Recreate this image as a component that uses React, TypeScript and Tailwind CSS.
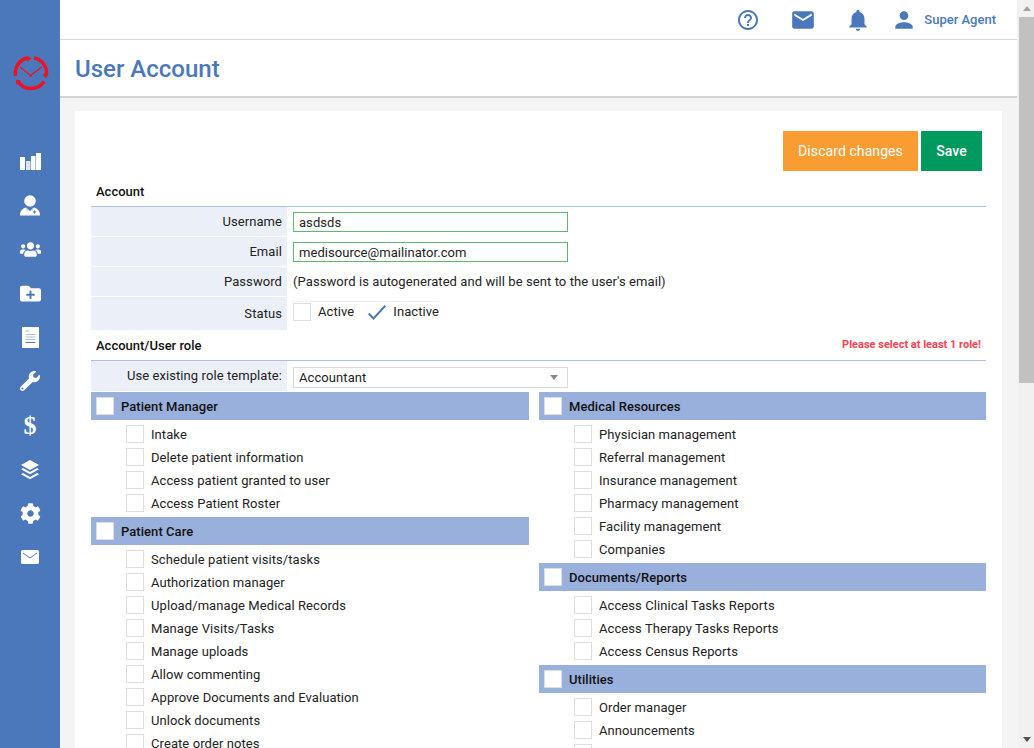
import { FaCog, FaFolderPlus, FaUsers, FaWrench } from "react-icons/fa";
import { MdEmail, MdHelpOutline, MdNotifications, MdPerson } from "react-icons/md";

const groupsLeft = [
  {
    title: "Patient Manager",
    items: ["Intake", "Delete patient information", "Access patient granted to user", "Access Patient Roster"],
  },
  {
    title: "Patient Care",
    items: [
      "Schedule patient visits/tasks",
      "Authorization manager",
      "Upload/manage Medical Records",
      "Manage Visits/Tasks",
      "Manage uploads",
      "Allow commenting",
      "Approve Documents and Evaluation",
      "Unlock documents",
      "Create order notes",
    ],
  },
];

const groupsRight = [
  {
    title: "Medical Resources",
    items: [
      "Physician management",
      "Referral management",
      "Insurance management",
      "Pharmacy management",
      "Facility management",
      "Companies",
    ],
  },
  {
    title: "Documents/Reports",
    items: ["Access Clinical Tasks Reports", "Access Therapy Tasks Reports", "Access Census Reports"],
  },
  {
    title: "Utilities",
    items: ["Order manager", "Announcements", ""],
  },
];

function Logo() {
  return (
    <svg width="36" height="36" viewBox="0 0 36 36" fill="none">
      <g stroke="#ee1122" strokeWidth="3.4">
        <path d="M2.600 21A15.500 15.500 0 0 1 14 3" />
        <path d="M21 2.800A15.500 15.500 0 0 1 33.500 19" />
        <path d="M31 26.500A15.500 15.500 0 0 1 5 26.500" />
      </g>
      <g fill="#ee1122">
        <path d="M14 .8l4.500 2.600-4 3.400z" />
        <path d="M35.500 18.500l-2.500 5-3.500-4.500z" />
        <path d="M3.500 30l-.8-5.500 5 1z" />
      </g>
      <path d="M7 12l12 9.500M29 12l-13 9.500" stroke="#ee1122" strokeWidth="1.200" />
    </svg>
  );
}

function BarsIcon() {
  return (
    <svg width="21" height="17" viewBox="0 0 21 17" fill="#fff">
      <rect x="0" y="4" width="5" height="13" />
      <rect x="6" y="8" width="4.500" height="9" opacity="0.8" />
      <rect x="11" y="3" width="4.500" height="14" />
      <rect x="16" y="0" width="5" height="17" />
    </svg>
  );
}

function DoctorIcon() {
  return (
    <svg width="20" height="21" viewBox="0 0 20 21" fill="#fff">
      <circle cx="10" cy="6" r="5.800" />
      <path d="M0 20.500c0-4 1.500-6.500 6-8l4 3.500 4-3.500c4.500 1.500 6 4 6 8z" />
      <path d="M14.500 15.500v3M13 17h3" stroke="#4a78bb" strokeWidth="1.200" />
      <path d="M6.500 13l1 3M13 13l-1 2" stroke="#a9bfe0" strokeWidth="0.800" />
    </svg>
  );
}

function DocIcon() {
  return (
    <svg width="17" height="21" viewBox="0 0 17 21">
      <rect x="0" y="0" width="17" height="21" fill="#fff" />
      <path d="M3.500 4h4M3.500 7.500h10M3.500 10h10M3.500 12.500h10" stroke="#a9bfe0" strokeWidth="1" />
      <path d="M3.500 15.500h10" stroke="#4a78bb" strokeWidth="1" />
    </svg>
  );
}

function LayersIcon() {
  return (
    <svg width="18" height="20" viewBox="0 0 18 20" fill="#fff" className="mt-[2px]">
      <path d="M9 0l9 5-9 5-9-5z" />
      <path d="M2 8l7 4 7-4 2 1.200-9 5-9-5z" />
      <path d="M2 13l7 4 7-4 2 1.200-9 5-9-5z" />
    </svg>
  );
}

function MailIcon() {
  return (
    <svg width="18" height="14" viewBox="0 0 18 14">
      <rect width="18" height="14" rx="1.500" fill="#fff" />
      <path d="M2 3l7 5 7-5" fill="none" stroke="#4a78bb" strokeWidth="1" />
    </svg>
  );
}

function CheckBox() {
  return <span className="block h-[18px] w-[18px] shrink-0 border border-[#dddddd] bg-white" />;
}

function RoleGroup({ title, items }: { title: string; items: string[] }) {
  return (
    <div className="pb-[3px]">
      <div className="flex h-[28px] items-center gap-[7px] bg-[#99b0dc] pl-[5px] font-medium tracking-[0.05px] text-[#111]">
        <CheckBox />
        <span className="pt-[2px]">{title}</span>
      </div>
      <ul className="pt-[2px]">
        {items.map((item, i) => (
          <li key={i} className="flex h-[23px] items-center gap-[7px] pl-[35px]">
            <CheckBox />
            <span className="pt-[2px]">{item}</span>
          </li>
        ))}
      </ul>
    </div>
  );
}

function Row({ label, className, children }: { label: string; className: string; children: React.ReactNode }) {
  return (
    <div className={`flex ${className}`}>
      <div className="flex w-[196px] shrink-0 items-center justify-end bg-[#ebf0f8] pr-[5px]">{label}</div>
      <div className="flex flex-1 items-center pl-[6px]">{children}</div>
    </div>
  );
}

function SectionHead({ title, note }: { title: string; note?: string }) {
  return (
    <div className="flex h-[31px] items-center justify-between border-b border-b-[#aebfdb] px-[5px] pt-[2px] text-[13px] font-medium tracking-normal text-[#111]">
      {title}
      {note && <span className="mb-[2px] text-[11px] font-bold text-[#ff4050]">{note}</span>}
    </div>
  );
}

function TextBox({ value }: { value: string }) {
  return (
    <div className="flex h-[20px] w-[275px] items-center border border-[#5cb870] px-[5px] pt-[3px] tracking-[0.05px] text-[#222]">
      {value}
    </div>
  );
}

export default function App() {
  return (
    <div
      className="flex h-screen overflow-hidden bg-[#f4f4f4] text-[13px] tracking-[0.08px] text-[#222]"
      style={{ fontFamily: "Roboto, sans-serif" }}
    >
      <aside className="flex w-[60px] shrink-0 flex-col items-center bg-[#4a78bb] text-white">
        <div className="mt-[55px] ml-[2px]">
          <Logo />
        </div>
        <nav className="mt-[48px] flex flex-col items-center">
          <span className="flex h-[44px] items-center"><BarsIcon /></span>
          <span className="flex h-[44px] items-center"><DoctorIcon /></span>
          <span className="flex h-[44px] items-center"><FaUsers size={21} /></span>
          <span className="flex h-[44px] items-center"><FaFolderPlus size={21} /></span>
          <span className="flex h-[44px] items-center"><DocIcon /></span>
          <span className="flex h-[44px] items-center"><FaWrench size={20} /></span>
          <span className="flex h-[44px] items-center font-['Liberation_Serif'] text-[26px] font-bold">$</span>
          <span className="flex h-[44px] items-center"><LayersIcon /></span>
          <span className="flex h-[44px] items-center"><FaCog size={21} /></span>
          <span className="flex h-[44px] items-center"><MailIcon /></span>
        </nav>
      </aside>

      <div className="flex min-w-0 flex-1 flex-col">
        <header className="flex h-[40px] shrink-0 items-center justify-end border-b border-[#d9d9d9] bg-white pr-[21px] tracking-normal text-[#4a78bb]">
          <MdHelpOutline size={24} />
          <MdEmail size={26} className="ml-[30px]" />
          <MdNotifications size={26} className="ml-[29px]" />
          <MdPerson size={26} className="ml-[20px]" />
          <span className="ml-[7px] font-medium">Super Agent</span>
        </header>
        <div className="flex h-[58px] shrink-0 items-center border-b-2 border-[#d4d4d4] bg-white pl-[15px] pt-[2px] tracking-normal">
          <h1 className="text-[24px] font-medium text-[#4a78bb]">User Account</h1>
        </div>

        <main className="flex-1 overflow-hidden px-[15px] pt-[13px]">
          <div className="h-[700px] bg-white px-[16px] pt-[20px]">
            <div className="flex justify-end gap-[3px] pr-[4px]">
              <button className="h-[40px] w-[135px] bg-[#f99d33] text-[14px] text-white">Discard changes</button>
              <button className="h-[40px] w-[61px] bg-[#009a5e] text-[14px] font-medium tracking-normal text-white">
                Save
              </button>
            </div>
            <div className="pt-[5px]">
              <SectionHead title="Account" />
            </div>
            <div className="flex flex-col gap-px">
              <Row label="Username" className="h-[29px]">
                <TextBox value="asdsds" />
              </Row>
              <Row label="Email" className="h-[29px]">
                <TextBox value="medisource@mailinator.com" />
              </Row>
              <Row label="Password" className="h-[29px]">
                (Password is autogenerated and will be sent to the user's email)
              </Row>
              <Row label="Status" className="h-[33px]">
                <div className="mb-[4px] flex items-center border-t border-[#f2f2f2]">
                  <CheckBox />
                  <span className="ml-[7px]">Active</span>
                  <svg width="18" height="15" viewBox="0 0 18 15" fill="none" className="ml-[14px]">
                    <path d="M.7 8.500l4.800 5L17.300.7" stroke="#4a78bb" strokeWidth="2" />
                  </svg>
                  <span className="ml-[7px]">Inactive</span>
                </div>
              </Row>
            </div>
            <SectionHead title="Account/User role" note="Please select at least 1 role!" />
            <Row label="Use existing role template:" className="h-[30px]">
              <div className="mt-[2px] flex h-[21px] w-[275px] items-center justify-between border border-[#d9d9d9] pl-[5px] pr-[9px] pt-[1px]">
                Accountant
                <span className="h-0 w-0 border-x-[4px] border-t-[5px] border-x-transparent border-t-[#888]" />
              </div>
            </Row>
            <div className="mt-px grid grid-cols-[438px_447px] gap-x-[10px]">
              <div>
                {groupsLeft.map((g) => (
                  <RoleGroup key={g.title} title={g.title} items={g.items} />
                ))}
              </div>
              <div>
                {groupsRight.map((g) => (
                  <RoleGroup key={g.title} title={g.title} items={g.items} />
                ))}
              </div>
            </div>
          </div>
        </main>
      </div>

      <div className="flex w-[17px] shrink-0 flex-col items-end bg-[#f1f1f1]">
        <div className="flex h-[17px] w-[15px] items-center justify-center">
          <span className="h-0 w-0 border-x-[4px] border-b-[5px] border-x-transparent border-b-[#a3a3a3]" />
        </div>
        <div className="h-[366px] w-[15px] bg-[#c1c1c1]" />
        <div className="flex-1" />
        <div className="flex h-[17px] w-[15px] items-center justify-center">
          <span className="h-0 w-0 border-x-[4px] border-t-[5px] border-x-transparent border-t-[#505050]" />
        </div>
      </div>
    </div>
  );
}
